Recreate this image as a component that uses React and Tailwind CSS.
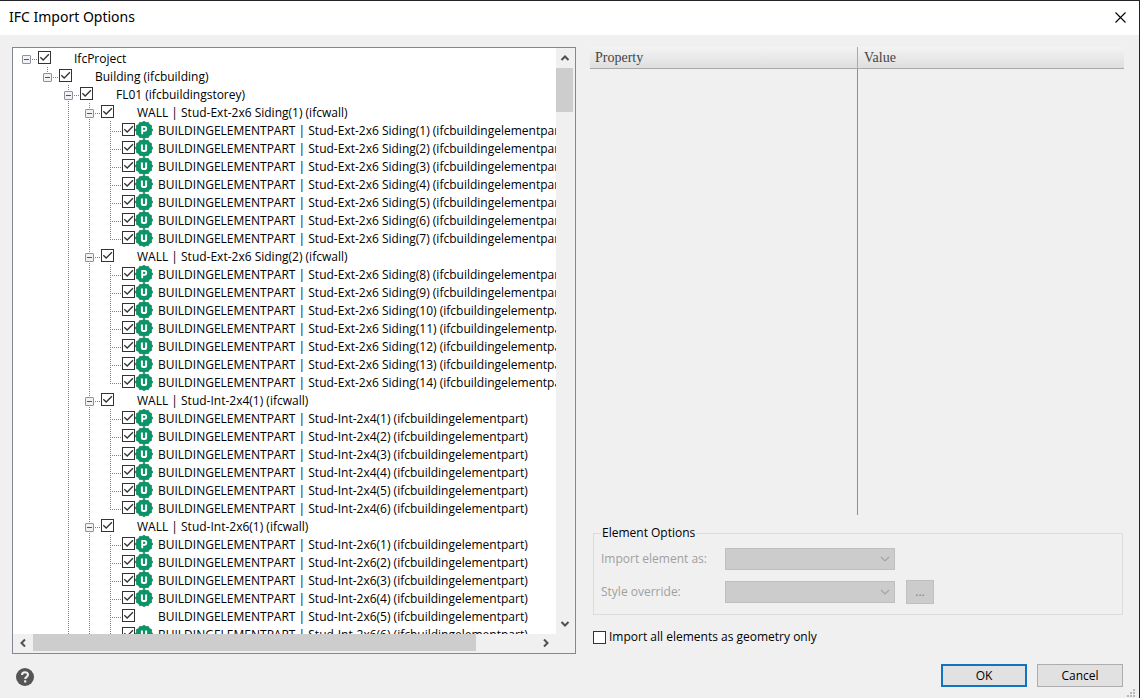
import { useState } from "react";

const part = (name, badge = "U") => ({ label: `BUILDINGELEMENTPART | ${name} (ifcbuildingelementpart)`, badge });

const wall = (name, partName, first, last, plain = []) => {
  const children = [];
  for (let i = first; i <= last; i++) {
    children.push(part(`${partName}(${i})`, plain.includes(i) ? null : i === first ? "P" : "U"));
  }
  return { label: `WALL | ${name} (ifcwall)`, children };
};

const project = {
  label: "IfcProject",
  children: [
    {
      label: "Building (ifcbuilding)",
      children: [
        {
          label: "FL01 (ifcbuildingstorey)",
          children: [
            wall("Stud-Ext-2x6 Siding(1)", "Stud-Ext-2x6 Siding", 1, 7),
            wall("Stud-Ext-2x6 Siding(2)", "Stud-Ext-2x6 Siding", 8, 14),
            wall("Stud-Int-2x4(1)", "Stud-Int-2x4", 1, 6),
            wall("Stud-Int-2x6(1)", "Stud-Int-2x6", 1, 7, [5]),
            wall("Stud-Int-2x6(2)", "Stud-Int-2x6", 8, 8),
          ],
        },
        { label: "FL02 (ifcbuildingstorey)", children: [] },
      ],
    },
  ],
};

function flatten(node, closed, guides = [], isLast = true, path = "n") {
  const row = { ...node, path, guides, isLast, open: !closed[path] };
  if (!node.children || closed[path]) return [row];
  const next = [...guides, !isLast];
  return [
    row,
    ...node.children.flatMap((c, i) =>
      flatten(c, closed, next, i === node.children.length - 1, `${path}-${i}`)
    ),
  ];
}

function Guide({ on }) {
  return (
    <svg className="h-[18px] w-[21px] shrink-0" viewBox="0 0 21 18" aria-hidden="true">
      {on && <path d="M10.5 0V18" stroke="#808080" strokeDasharray="1 1" />}
    </svg>
  );
}

function Connector({ root, isLast, branch, open }) {
  return (
    <svg className="h-[18px] w-[21px]" viewBox="0 0 21 18" aria-hidden="true">
      {!root && <path d={isLast ? "M10.5 0V10" : "M10.5 0V18"} stroke="#808080" strokeDasharray="1 1" />}
      <path d="M10 10.5H21" stroke="#808080" strokeDasharray="1 1" />
      {branch && (
        <>
          <rect x="6.5" y="6.5" width="8" height="8" rx="0.5" fill="#f1f2f5" stroke="#8f9299" />
          <path d="M8 10.5H13" stroke="#40548c" />
          {!open && <path d="M10.5 8V13" stroke="#40548c" />}
        </>
      )}
    </svg>
  );
}

function CheckBox({ id, defaultChecked }) {
  return (
    <span className="grid size-[13px] shrink-0">
      <input
        id={id}
        type="checkbox"
        defaultChecked={defaultChecked}
        className="peer col-start-1 row-start-1 size-[13px] appearance-none border border-[#333] bg-white"
      />
      <svg className="pointer-events-none invisible col-start-1 row-start-1 size-[13px] peer-checked:visible" viewBox="0 0 13 13" aria-hidden="true">
        <path d="M2.3 6.2L5.2 9L10.9 3.3" fill="none" stroke="#333" strokeWidth="1.3" />
      </svg>
    </span>
  );
}

function Badge({ letter }) {
  return (
    <svg className="size-[18px]" viewBox="0 0 18 18" aria-hidden="true">
      <path
        d="M9 0.2L11 1.6L13.4 1.4L14.4 3.6L16.6 4.6L16.4 7L17.8 9L16.4 11L16.6 13.4L14.4 14.4L13.4 16.6L11 16.4L9 17.8L7 16.4L4.6 16.6L3.6 14.4L1.4 13.4L1.6 11L0.2 9L1.6 7L1.4 4.6L3.6 3.6L4.6 1.4L7 1.6Z"
        fill="#0b9467"
        stroke="#0a7f58"
        strokeWidth="0.7"
        strokeLinejoin="round"
      />
      {letter === "P" ? (
        <path d="M7.2 13.2V5.8H9.3A1.8 1.8 0 0 1 9.3 9.8H7.2" fill="none" stroke="#fff" strokeWidth="1.8" />
      ) : (
        <path d="M6.9 5.6V10.4Q6.9 12 9 12Q11.1 12 11.1 10.4V5.6" fill="none" stroke="#fff" strokeWidth="2" />
      )}
    </svg>
  );
}

function Chevron({ d, muted }) {
  return (
    <svg className="size-[10px]" viewBox="0 0 10 10" aria-hidden="true">
      <path d={d} fill="none" stroke={muted ? "#a3a3a3" : "#505050"} strokeWidth={muted ? 1.2 : 2} />
    </svg>
  );
}

function TreeRow({ row, onToggle }) {
  const { path, guides, isLast, label, badge, children, open } = row;
  const connector = <Connector root={guides.length === 0} isLast={isLast} branch={!!children} open={open} />;
  return (
    <li className="flex h-[18px] items-start whitespace-nowrap">
      {guides.map((on, i) => (
        <Guide key={i} on={on} />
      ))}
      {children ? (
        <button type="button" aria-label={`Toggle ${label}`} aria-expanded={open} onClick={() => onToggle(path)} className="mr-px shrink-0">
          {connector}
        </button>
      ) : (
        <span className="mr-px shrink-0">{connector}</span>
      )}
      <span className="flex pt-[2px]">
        <CheckBox id={path} defaultChecked />
      </span>
      <span className="mr-[5px] flex h-[18px] w-[18px] shrink-0">{badge && <Badge letter={badge} />}</span>
      <label htmlFor={path}>{label}</label>
    </li>
  );
}

function TreePanel() {
  const [closed, setClosed] = useState({});
  const rows = flatten(project, closed);
  const toggle = (p) => setClosed((c) => ({ ...c, [p]: !c[p] }));
  return (
    <section className="grid min-h-0 min-w-0 grid-cols-[minmax(0,1fr)_19px] grid-rows-[minmax(0,1fr)_19px] border border-[#828790] bg-white">
      <ul className="min-h-0 overflow-auto pt-px pl-[3px] [scrollbar-width:none]">
        {rows.map((r) => (
          <TreeRow key={r.path} row={r} onToggle={toggle} />
        ))}
      </ul>
      <div className="flex flex-col bg-[#f0f0f0] pr-[2px]">
        <button type="button" aria-label="Scroll up" className="grid h-[20px] place-items-center">
          <Chevron d="M1.5 7L5 3.5L8.5 7" />
        </button>
        <div className="flex-1">
          <div className="h-[8%] bg-[#cdcdcd]" />
        </div>
        <button type="button" aria-label="Scroll down" className="grid h-[20px] place-items-center">
          <Chevron d="M1.5 3L5 6.5L8.5 3" />
        </button>
      </div>
      <div className="flex bg-[#f0f0f0] pb-[2px]">
        <button type="button" aria-label="Scroll left" className="grid w-[20px] place-items-center">
          <Chevron d="M7 1.5L3.5 5L7 8.5" />
        </button>
        <div className="flex-1">
          <div className="h-full w-[88%] bg-[#cdcdcd]" />
        </div>
        <button type="button" aria-label="Scroll right" className="grid w-[20px] place-items-center">
          <Chevron d="M3 1.5L6.5 5L3 8.5" />
        </button>
      </div>
      <div className="bg-[#f0f0f0]" />
    </section>
  );
}

function DisabledSelect({ id }) {
  return (
    <span className="grid w-[170px] items-center">
      <select id={id} disabled className="col-start-1 row-start-1 h-[22px] w-full appearance-none border border-[#bfbfbf] bg-[#cccccc]" />
      <span className="pointer-events-none col-start-1 row-start-1 mr-[5px] justify-self-end">
        <Chevron d="M1 3L5 7L9 3" muted />
      </span>
    </span>
  );
}

function OptionsPanel() {
  return (
    <section className="flex min-h-0 min-w-0 flex-col">
      <table className="w-full flex-1 table-fixed border-separate border-spacing-0">
        <colgroup>
          <col className="w-[268px]" />
          <col />
        </colgroup>
        <thead className="bg-linear-to-b from-[#f3f3f3] to-[#dedede] text-left font-['Liberation_Serif',serif] text-[14px] text-[#444]">
          <tr>
            <th className="h-[22px] border-r border-b border-[#a9a9a9] px-[5px] font-normal">Property</th>
            <th className="h-[22px] border-b border-[#a9a9a9] px-[6px] font-normal">Value</th>
          </tr>
        </thead>
        <tbody>
          <tr>
            <td className="border-r border-[#8f8f8f]" />
            <td />
          </tr>
        </tbody>
      </table>

      <fieldset className="mt-[10px] mr-px ml-[3px] border border-[#dcdcdc] px-[7px] pb-[10px]">
        <legend className="px-px leading-[16px]">Element Options</legend>
        <div className="grid grid-cols-[124px_170px_28px] items-center gap-y-[10px] pt-[7px] text-[#a0a0a0]">
          <label htmlFor="import-as">Import element as:</label>
          <DisabledSelect id="import-as" />
          <span />
          <label htmlFor="style-override">Style override:</label>
          <DisabledSelect id="style-override" />
          <button type="button" disabled aria-label="Browse styles" className="ml-[11px] h-[24px] w-[28px] border border-[#bfbfbf] bg-[#cccccc] text-[#838383]">
            ...
          </button>
        </div>
      </fieldset>

      <div className="mt-[15px] mb-[10px] ml-[3px] flex h-[14px] items-center gap-[3px]">
        <CheckBox id="geometry-only" />
        <label htmlFor="geometry-only">Import all elements as geometry only</label>
      </div>
    </section>
  );
}

export default function App() {
  return (
    <main className="flex h-screen flex-col overflow-hidden border-t border-r border-[#242229] bg-[#f0f0f0] font-['Open_Sans',sans-serif] text-[12px] leading-[20px] text-black">
      <header className="flex h-[34px] shrink-0 items-center justify-between bg-white pr-[13px] pb-[2px] pl-[9px]">
        <h1 className="font-['Noto_Sans',sans-serif] text-[14px]">IFC Import Options</h1>
        <button type="button" aria-label="Close">
          <svg className="size-[11px]" viewBox="0 0 11 11" aria-hidden="true">
            <path d="M0.5 0.5L10.5 10.5M10.5 0.5L0.5 10.5" stroke="#000" strokeWidth="1.1" />
          </svg>
        </button>
      </header>

      <div className="grid min-h-0 flex-1 grid-cols-[564fr_534fr] grid-rows-[minmax(0,1fr)] gap-[14px] pt-[12px] pr-[15px] pl-[12px]">
        <TreePanel />
        <OptionsPanel />
      </div>

      <footer className="flex h-[44px] shrink-0 items-start pt-[10px] pl-[16px]">
        <button type="button" aria-label="Help" className="pt-[4px]">
          <svg className="size-[18px]" viewBox="0 0 18 18" aria-hidden="true">
            <circle cx="9" cy="9" r="9" fill="#555" />
            <path d="M6 7C6 3.3 12 3.3 12 6.8C12 8.8 9.2 8.8 9.2 11" fill="none" stroke="#f0f0f0" strokeWidth="2.1" />
            <rect x="8.1" y="12.3" width="2.2" height="2.2" fill="#f0f0f0" />
          </svg>
        </button>
        <div className="ml-auto flex gap-[10px]">
          <button type="button" className="h-[23px] w-[86px] border-2 border-[#0f74c4] bg-[#e1e1e1] leading-[16px]">
            OK
          </button>
          <button type="button" className="h-[23px] w-[86px] border border-[#adadad] bg-[#e1e1e1] leading-[16px]">
            Cancel
          </button>
        </div>
        <svg className="mr-[3px] ml-[4px] size-[9px] self-end" viewBox="0 0 9 9" aria-hidden="true">
          <path d="M6 0h2v2h-2zM3 3h2v2h-2zM6 3h2v2h-2zM0 6h2v2h-2zM3 6h2v2h-2zM6 6h2v2h-2z" fill="#b9b9b9" />
        </svg>
      </footer>
    </main>
  );
}
